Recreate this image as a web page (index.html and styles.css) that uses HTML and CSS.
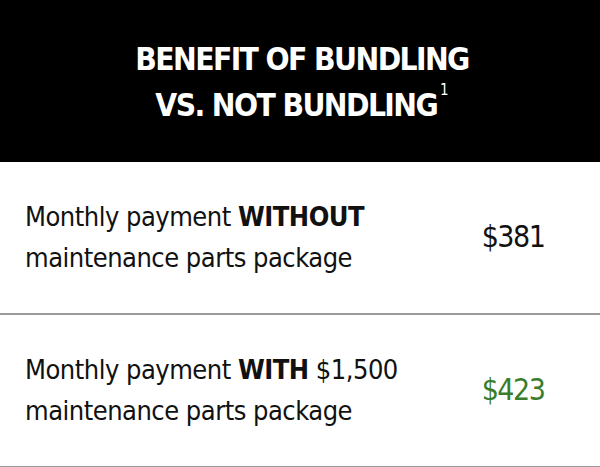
FILE: index.html
```html
<!DOCTYPE html>
<html lang="en">
<head>
<meta charset="utf-8">
<link rel="stylesheet" href="styles.css">
</head>
<body>
<div class="card">
  <header class="head">
    <h1 class="title">BENEFIT OF BUNDLING<br>VS. NOT BUNDLING<sup class="note">1</sup></h1>
  </header>
  <div class="row">
    <p class="label">Monthly payment <b>WITHOUT</b><br>maintenance parts package</p>
    <div class="price">$381</div>
  </div>
  <div class="row">
    <p class="label">Monthly payment <b>WITH</b> $1,500<br>maintenance parts package</p>
    <div class="price green">$423</div>
  </div>
</div>
</body>
</html>
```
FILE: styles.css
```css
html, body { margin: 0; padding: 0; background: #fff; }
body { font-family: "DejaVu Sans Condensed", "DejaVu Sans", sans-serif; color: #111; }
.card { width: 600px; }
.head { background: #000; height: 162px; display: flex; align-items: center; justify-content: center; }
.title { margin: 0; color: #fff; font-size: 31.5px; font-weight: bold; line-height: 46px; text-align: center; letter-spacing: -1.6px; padding-top: 2px; padding-left: 4px; }
.note { font-size: 15px; font-weight: normal; line-height: 0; vertical-align: top; position: relative; top: 8px; margin-left: 3px; letter-spacing: 0; }
.row { display: grid; grid-template-columns: 1fr 174px; align-items: center; height: 151px; border-bottom: 2px solid #9a9a9a; padding-left: 25px; }
.label { margin: 0; font-size: 27px; line-height: 41px; letter-spacing: -0.5px; padding-bottom: 2px; }
.label b { font-weight: bold; }
.price { text-align: center; font-size: 30px; letter-spacing: -1.5px; padding-bottom: 2px; }
.green { color: #3a7d2c; }
```
